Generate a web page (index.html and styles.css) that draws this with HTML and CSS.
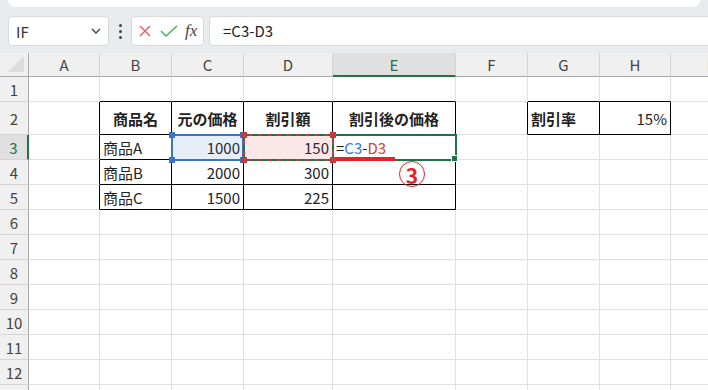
FILE: index.html
```html
<!DOCTYPE html>
<html lang="ja">

<head>
    <meta charset="UTF-8">
    <meta name="viewport" content="width=device-width, initial-scale=1.0">
    <title>割引後の価格</title>
    <link rel="stylesheet" href="styles.css">
</head>

<body>
    <div class="ribbon"></div>

    <div class="fbar">
        <div class="namebox">
            <span>IF</span>
            <svg width="10" height="6" viewBox="0 0 10 6"><polyline points="1,1 5,5 9,1" fill="none" stroke="#444" stroke-width="1.4"/></svg>
        </div>
        <div class="kebab"><span></span><span></span><span></span></div>
        <div class="fxbox">
            <svg width="14" height="14" viewBox="0 0 14 14"><path d="M2 2 L12 12 M12 2 L2 12" stroke="#e25c5c" stroke-width="1.4" fill="none"/></svg>
            <svg width="18" height="14" viewBox="0 0 18 14"><polyline points="1,7 6,12 17,2" stroke="#4caf63" stroke-width="1.5" fill="none"/></svg>
            <span class="fx">fx</span>
        </div>
        <div class="formula">=C3-D3</div>
    </div>

    <div class="sheet">
        <!-- header row -->
        <div class="corner"></div>
        <div class="ch">A</div>
        <div class="ch">B</div>
        <div class="ch">C</div>
        <div class="ch">D</div>
        <div class="ch sel">E</div>
        <div class="ch">F</div>
        <div class="ch">G</div>
        <div class="ch">H</div>
        <div class="ch">I</div>

        <!-- 1 -->
        <div class="rh">1</div>
        <div class="c"></div>
        <div class="c bb"></div>
        <div class="c bb"></div>
        <div class="c bb"></div>
        <div class="c bb"></div>
        <div class="c"></div>
        <div class="c bb"></div>
        <div class="c bb"></div>
        <div class="c"></div>

        <!-- 2 -->
        <div class="rh">2</div>
        <div class="c br"></div>
        <div class="c br bb hd">商品名</div>
        <div class="c br bb hd">元の価格</div>
        <div class="c br bb hd">割引額</div>
        <div class="c br bb hd">割引後の価格</div>
        <div class="c br"></div>
        <div class="c br bb hd left">割引率</div>
        <div class="c br bb num">15%</div>
        <div class="c"></div>

        <!-- 3 -->
        <div class="rh sel">3</div>
        <div class="c br"></div>
        <div class="c br bb">商品A</div>
        <div class="c br bb num">1000</div>
        <div class="c br bb num">150</div>
        <div class="c br bb edit">=<span class="ref-c">C3</span>-<span class="ref-d">D3</span></div>
        <div class="c"></div>
        <div class="c"></div>
        <div class="c"></div>
        <div class="c"></div>

        <!-- 4 -->
        <div class="rh">4</div>
        <div class="c br"></div>
        <div class="c br bb">商品B</div>
        <div class="c br bb num">2000</div>
        <div class="c br bb num">300</div>
        <div class="c br bb"></div>
        <div class="c"></div>
        <div class="c"></div>
        <div class="c"></div>
        <div class="c"></div>

        <!-- 5 -->
        <div class="rh">5</div>
        <div class="c br"></div>
        <div class="c br bb">商品C</div>
        <div class="c br bb num">1500</div>
        <div class="c br bb num">225</div>
        <div class="c br bb"></div>
        <div class="c"></div>
        <div class="c"></div>
        <div class="c"></div>
        <div class="c"></div>

        <div class="rh">6</div>
        <div class="c"></div><div class="c"></div><div class="c"></div><div class="c"></div><div class="c"></div><div class="c"></div><div class="c"></div><div class="c"></div><div class="c"></div>
        <div class="rh">7</div>
        <div class="c"></div><div class="c"></div><div class="c"></div><div class="c"></div><div class="c"></div><div class="c"></div><div class="c"></div><div class="c"></div><div class="c"></div>
        <div class="rh">8</div>
        <div class="c"></div><div class="c"></div><div class="c"></div><div class="c"></div><div class="c"></div><div class="c"></div><div class="c"></div><div class="c"></div><div class="c"></div>
        <div class="rh">9</div>
        <div class="c"></div><div class="c"></div><div class="c"></div><div class="c"></div><div class="c"></div><div class="c"></div><div class="c"></div><div class="c"></div><div class="c"></div>
        <div class="rh">10</div>
        <div class="c"></div><div class="c"></div><div class="c"></div><div class="c"></div><div class="c"></div><div class="c"></div><div class="c"></div><div class="c"></div><div class="c"></div>
        <div class="rh">11</div>
        <div class="c"></div><div class="c"></div><div class="c"></div><div class="c"></div><div class="c"></div><div class="c"></div><div class="c"></div><div class="c"></div><div class="c"></div>
        <div class="rh">12</div>
        <div class="c"></div><div class="c"></div><div class="c"></div><div class="c"></div><div class="c"></div><div class="c"></div><div class="c"></div><div class="c"></div><div class="c"></div>
        <div class="rh">13</div>
        <div class="c"></div><div class="c"></div><div class="c"></div><div class="c"></div><div class="c"></div><div class="c"></div><div class="c"></div><div class="c"></div><div class="c"></div>

        <!-- reference highlights drawn over the grid -->
        <div class="hl hl-c">
            <i class="sq tl"></i><i class="sq tr"></i><i class="sq bl"></i><i class="sq br2"></i>
        </div>
        <div class="hl hl-d">
            <i class="sq tl"></i><i class="sq tr"></i><i class="sq bl"></i><i class="sq br2"></i>
        </div>
        <div class="hl hl-e"><i class="handle"></i></div>
        <div class="mark-line"></div>
        <div class="mark-num">3</div>
    </div>
</body>

</html>
```

FILE: styles.css
```css
body {
    margin: 0;
    background-color: #e9ecef;
    font-family: "Noto Sans CJK JP", "Noto Sans", sans-serif;
    color: #222;
    overflow: hidden;
}

/* ribbon bottom edge */
.ribbon {
    height: 7px;
    margin: 0 8px;
    background: #fff;
    border-radius: 0 0 8px 8px;
}

/* formula bar */
.fbar {
    display: flex;
    align-items: center;
    height: 30px;
    margin-top: 9px;
    padding-left: 8px;
}

.namebox {
    width: 101px;
    height: 30px;
    box-sizing: border-box;
    background: #fff;
    border: 1px solid #d9d9d9;
    border-radius: 4px;
    display: flex;
    align-items: center;
    justify-content: space-between;
    padding: 0 7px 0 7px;
    font-size: 15px;
    color: #333;
}

.kebab {
    width: 22px;
    display: flex;
    flex-direction: column;
    align-items: center;
    gap: 3px;
}

.kebab span {
    width: 3px;
    height: 3px;
    background: #444;
    border-radius: 50%;
}

.fxbox {
    width: 73px;
    height: 30px;
    box-sizing: border-box;
    background: #fff;
    border: 1px solid #d9d9d9;
    border-radius: 4px;
    display: flex;
    align-items: center;
    gap: 8px;
    padding-left: 6px;
}

.fx {
    font-family: "Liberation Serif", serif;
    font-style: italic;
    font-size: 17px;
    color: #444;
    margin-left: -1px;
}

.formula {
    flex: 1;
    height: 30px;
    margin-left: 5px;
    box-sizing: border-box;
    background: #fff;
    border: 1px solid #d9d9d9;
    border-right: none;
    border-radius: 4px 0 0 4px;
    font-size: 15px;
    line-height: 28px;
    padding-left: 13px;
    color: #222;
}

/* sheet grid */
.sheet {
    position: relative;
    width: 748px;
    margin-top: 7px;
    display: grid;
    grid-template-columns: 29px 71px 72px 72px 89px 123px 72px 72px 71px 1fr;
    grid-template-rows: 24px 25px 33px repeat(10, 25px);
    background: #fff;
    font-size: 15px;
}

.sheet > div {
    box-sizing: border-box;
}

.corner {
    background: #f0f0f0;
    border-right: 1px solid #a9a9a9;
    border-bottom: 1px solid #a9a9a9;
    position: relative;
}

.corner::after {
    content: "";
    position: absolute;
    right: 4px;
    bottom: 4px;
    border-style: solid;
    border-width: 0 0 16px 16px;
    border-color: transparent transparent #dcdcdc transparent;
}

.ch {
    background: #f0f0f0;
    border-right: 1px solid #d4d4d4;
    border-bottom: 1px solid #a9a9a9;
    text-align: center;
    line-height: 23px;
    color: #444;
}

.ch.sel {
    background: #e0e0e0;
    color: #217346;
    border-bottom: 2px solid #217346;
}

.rh {
    background: #f0f0f0;
    border-right: 1px solid #a9a9a9;
    border-bottom: 1px solid #d4d4d4;
    text-align: center;
    display: flex;
    align-items: center;
    justify-content: center;
    color: #444;
}

.rh.sel {
    background: #e0e0e0;
    color: #217346;
    border-right: 2px solid #217346;
}

.c {
    border-right: 1px solid #e1e1e1;
    border-bottom: 1px solid #e1e1e1;
    display: flex;
    align-items: center;
    padding: 0 3px;
    white-space: nowrap;
}

.c.bb { border-bottom-color: #000; }
.c.br { border-right-color: #000; }

.hd {
    font-weight: bold;
    justify-content: center;
}

.hd.left {
    justify-content: flex-start;
}

.num {
    justify-content: flex-end;
}

.edit {
    padding-left: 3px;
}

.ref-c { color: #3c78d8; }
.ref-d { color: #cc4444; }

/* highlight boxes */
.hl {
    position: absolute;
    box-sizing: border-box;
    pointer-events: none;
}

.hl-c {
    left: 171px;
    top: 81px;
    width: 73px;
    height: 27px;
    border: 2px solid #3c72c8;
    background: rgba(60, 114, 200, 0.12);
}

.hl-c .sq { background: #3c72c8; }

.hl-d {
    left: 243px;
    top: 81px;
    width: 91px;
    height: 27px;
    border: 2px solid #c6393f;
    background: rgba(214, 80, 80, 0.13);
}

.hl-d::before {
    content: "";
    position: absolute;
    left: -2px;
    top: -2px;
    right: -2px;
    bottom: -2px;
    border: 2px dashed #217346;
}

.hl-d .sq { background: #c6393f; z-index: 1; }

.sq {
    position: absolute;
    width: 6px;
    height: 6px;
}

.tl { left: -4px; top: -4px; }
.tr { right: -4px; top: -4px; }
.bl { left: -4px; bottom: -4px; }
.br2 { right: -4px; bottom: -4px; }

.hl-e {
    left: 333px;
    top: 81px;
    width: 124px;
    height: 27px;
    border: 2px solid #217346;
    border-left: none;
}

.handle {
    position: absolute;
    right: -3px;
    bottom: -3px;
    width: 5px;
    height: 5px;
    background: #217346;
    border: 1px solid #fff;
}

.mark-line {
    position: absolute;
    left: 333px;
    top: 104px;
    width: 62px;
    height: 4px;
    background: #e8202a;
}

.mark-num {
    position: absolute;
    left: 399px;
    top: 108px;
    width: 26px;
    height: 26px;
    border: 1.5px solid #e8202a;
    border-radius: 50%;
    color: #e8202a;
    font-weight: bold;
    font-size: 21px;
    line-height: 26px;
    text-align: center;
}
```
